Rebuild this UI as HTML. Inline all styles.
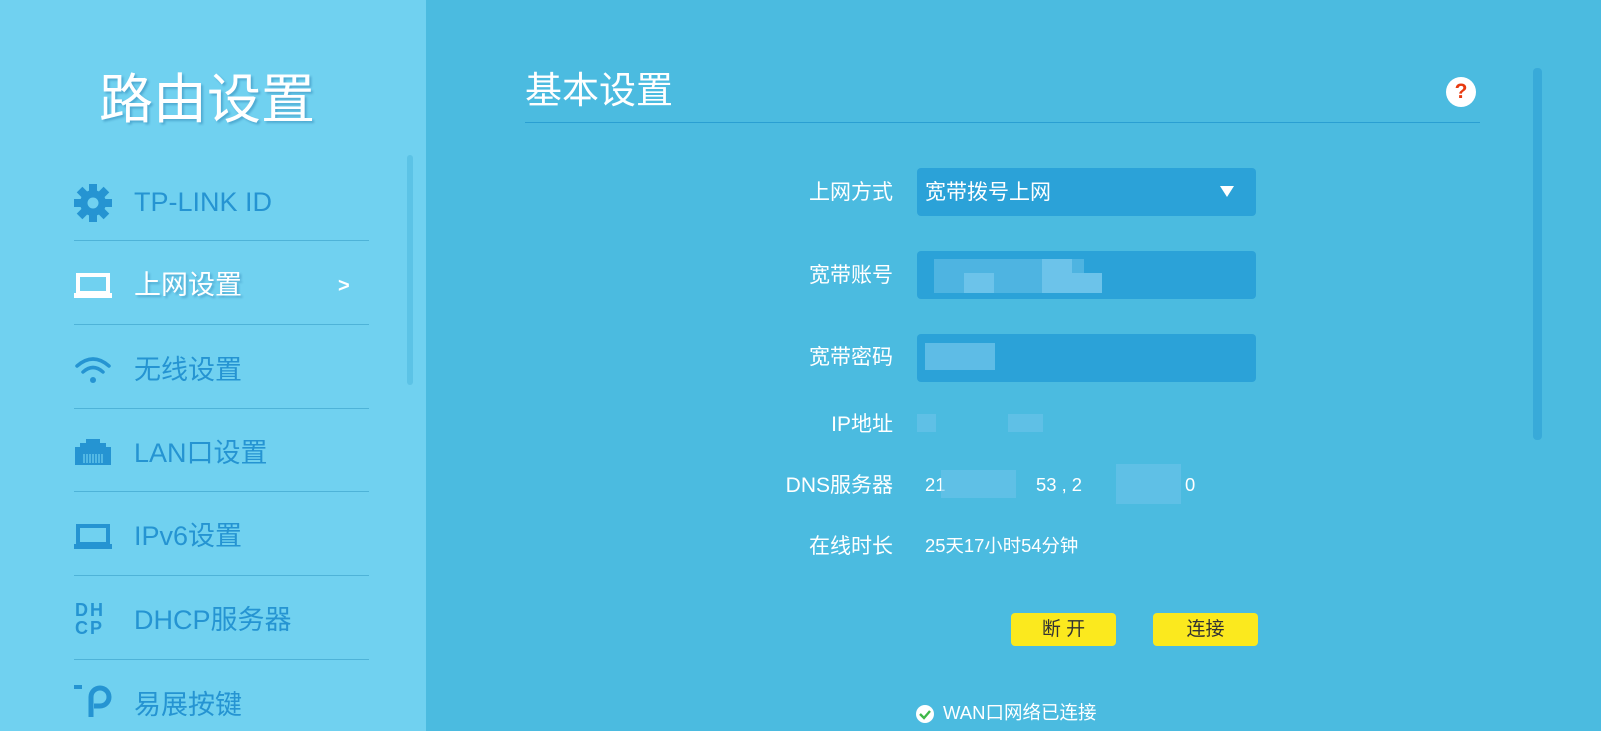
<!DOCTYPE html>
<html><head><meta charset="utf-8"><style>
*{margin:0;padding:0;box-sizing:border-box}
body{width:1601px;height:731px;overflow:hidden;background:#4bbbe0;font-family:"Liberation Sans","Noto Sans CJK SC",sans-serif;position:relative}
.side{position:absolute;left:0;top:0;width:426px;height:731px;background:#70d1f0}
.abs{position:absolute}
.t{position:absolute;white-space:nowrap;line-height:1}
.nav{color:#2594d2;font-size:27px}
.div{position:absolute;left:74px;width:295px;height:1px;background:#4eb3d8}
.lbl{position:absolute;right:708px;color:#fff;font-size:21px;line-height:1;white-space:nowrap}
.inp{position:absolute;left:917px;width:339px;height:48px;background:#2ba2d8;border-radius:4px}
.val{position:absolute;left:925px;color:#fff;font-size:18.4px;line-height:1;white-space:nowrap}
.btn{position:absolute;top:613px;width:105px;height:33px;background:#fbe91e;border-radius:4px;color:#333;font-size:19px;text-align:center;line-height:33px}
.blur{position:absolute;background:#6cc3ea}
</style></head><body>
<div class="side"></div>
<div class="t" style="left:99px;top:73px;font-size:54px;color:#fff;text-shadow:2px 2px 2px rgba(0,80,140,.3)">路由设置</div>
<div class="abs" style="left:407px;top:155px;width:6px;height:230px;background:#5cc3e6;border-radius:3px"></div>

<svg class="abs" style="left:74px;top:184px" width="38" height="38" viewBox="0 0 38 38"><g fill="#2594d2"><circle cx="19" cy="19" r="13"/><g transform="translate(19 19)"><rect x="-4" y="-19" width="8" height="8"/><rect x="-4" y="11" width="8" height="8"/><rect x="-19" y="-4" width="8" height="8"/><rect x="11" y="-4" width="8" height="8"/><g transform="rotate(45)"><rect x="-4" y="-19" width="8" height="8"/><rect x="-4" y="11" width="8" height="8"/><rect x="-19" y="-4" width="8" height="8"/><rect x="11" y="-4" width="8" height="8"/></g></g></g><circle cx="19" cy="19" r="5.5" fill="#70d1f0"/></svg>
<div class="t nav" style="left:134px;top:189px">TP-LINK ID</div>
<div class="div" style="top:240px"></div>

<svg class="abs" style="left:74px;top:273px" width="38" height="26"><rect x="4" y="2" width="30" height="18" fill="none" stroke="#fff" stroke-width="4"/><rect x="0" y="20" width="38" height="5" fill="#fff"/></svg>
<div class="t" style="left:134px;top:272px;font-size:27px;color:#fff;text-shadow:2px 2px 2px rgba(0,80,140,.3)">上网设置</div>
<div class="t" style="left:338px;top:276px;font-size:20px;color:#fff;font-weight:bold">&gt;</div>
<div class="div" style="top:324px"></div>

<svg class="abs" style="left:74px;top:355px" width="38" height="30" viewBox="0 0 38 30"><g fill="none" stroke="#2594d2" stroke-width="3.5" stroke-linecap="round"><path d="M3 11 Q19 -3 35 11"/><path d="M9 17 Q19 8 29 17"/></g><circle cx="19" cy="25" r="3" fill="#2594d2"/></svg>
<div class="t nav" style="left:134px;top:357px">无线设置</div>
<div class="div" style="top:408px"></div>

<svg class="abs" style="left:74px;top:437px" width="38" height="30"><path d="M6 6 H12 V2 H26 V6 H32 V10 H37 V28 H1 V10 H6Z" fill="#2594d2"/><g stroke="#70d1f0" stroke-width="1.2"><path d="M10 17V26M13 17V26M16 17V26M19 17V26M22 17V26M25 17V26M28 17V26"/></g></svg>
<div class="t nav" style="left:134px;top:440px">LAN口设置</div>
<div class="div" style="top:491px"></div>

<svg class="abs" style="left:74px;top:524px" width="38" height="26"><rect x="4" y="2" width="30" height="18" fill="none" stroke="#2594d2" stroke-width="4"/><rect x="0" y="20" width="38" height="5" fill="#2594d2"/></svg>
<div class="t nav" style="left:134px;top:523px">IPv6设置</div>
<div class="div" style="top:575px"></div>

<div class="t" style="left:75px;top:601px;font-size:18px;font-weight:bold;color:#2594d2;line-height:18px;letter-spacing:2px">DH<br>CP</div>
<div class="t nav" style="left:134px;top:607px">DHCP服务器</div>
<div class="div" style="top:659px"></div>

<svg class="abs" style="left:74px;top:683px" width="38" height="36"><rect x="0" y="2" width="8" height="4" fill="#2594d2"/><path d="M17 34 V14 a9 9 0 1 1 9 9 h-6" fill="none" stroke="#2594d2" stroke-width="5"/></svg>
<div class="t nav" style="left:134px;top:692px">易展按键</div>

<div class="t" style="left:525px;top:72px;font-size:37px;color:#fff">基本设置</div>
<div class="abs" style="left:525px;top:122px;width:955px;height:1px;background:#2a9fd2"></div>
<div class="abs" style="left:1451px;top:77px;width:30px;height:30px;border-radius:50%;background:#fff;color:#e83a10;font-weight:bold;font-size:21px;text-align:center;line-height:30px;transform:translateX(-5px)">?</div>
<div class="abs" style="left:1533px;top:68px;width:9px;height:372px;background:#38aad9;border-radius:4px"></div>

<div class="lbl" style="top:182px">上网方式</div>
<div class="inp" style="top:168px"></div>
<div class="val" style="top:182px;font-size:21px">宽带拨号上网</div>
<svg class="abs" style="left:1220px;top:186px" width="14" height="12"><path d="M0 0H14L7 11Z" fill="#fff"/></svg>

<div class="lbl" style="top:265px">宽带账号</div>
<div class="inp" style="top:251px"></div>
<div class="blur" style="left:934px;top:259px;width:150px;height:34px;opacity:.55"></div>
<div class="blur" style="left:964px;top:273px;width:30px;height:20px"></div>
<div class="blur" style="left:1042px;top:259px;width:30px;height:34px"></div>
<div class="blur" style="left:1072px;top:273px;width:30px;height:20px"></div>

<div class="lbl" style="top:347px">宽带密码</div>
<div class="inp" style="top:334px"></div>
<div class="blur" style="left:925px;top:343px;width:70px;height:27px;opacity:.8"></div>

<div class="lbl" style="top:414px">IP地址</div>
<div class="blur" style="left:917px;top:414px;width:19px;height:18px;opacity:.6"></div>
<div class="blur" style="left:1008px;top:414px;width:35px;height:18px;opacity:.6"></div>

<div class="lbl" style="top:475px">DNS服务器</div>
<div class="val" style="top:476px">21</div>
<div class="blur" style="left:941px;top:470px;width:75px;height:28px;opacity:.6"></div>
<div class="val" style="left:1036px;top:476px">53 , 2</div>
<div class="blur" style="left:1116px;top:464px;width:65px;height:40px;opacity:.6"></div>
<div class="val" style="left:1185px;top:476px">0</div>

<div class="lbl" style="top:536px">在线时长</div>
<div class="val" style="top:537px">25天17小时54分钟</div>

<div class="btn" style="left:1011px">断 开</div>
<div class="btn" style="left:1153px">连接</div>

<svg class="abs" style="left:915px;top:704px" width="20" height="20"><circle cx="10" cy="10" r="9" fill="#fff"/><path d="M5 10l4 4 6-7" fill="none" stroke="#3fb849" stroke-width="2.4"/></svg>
<div class="t" style="left:943px;top:704px;font-size:18.5px;color:#fff">WAN口网络已连接</div>
</body></html>
